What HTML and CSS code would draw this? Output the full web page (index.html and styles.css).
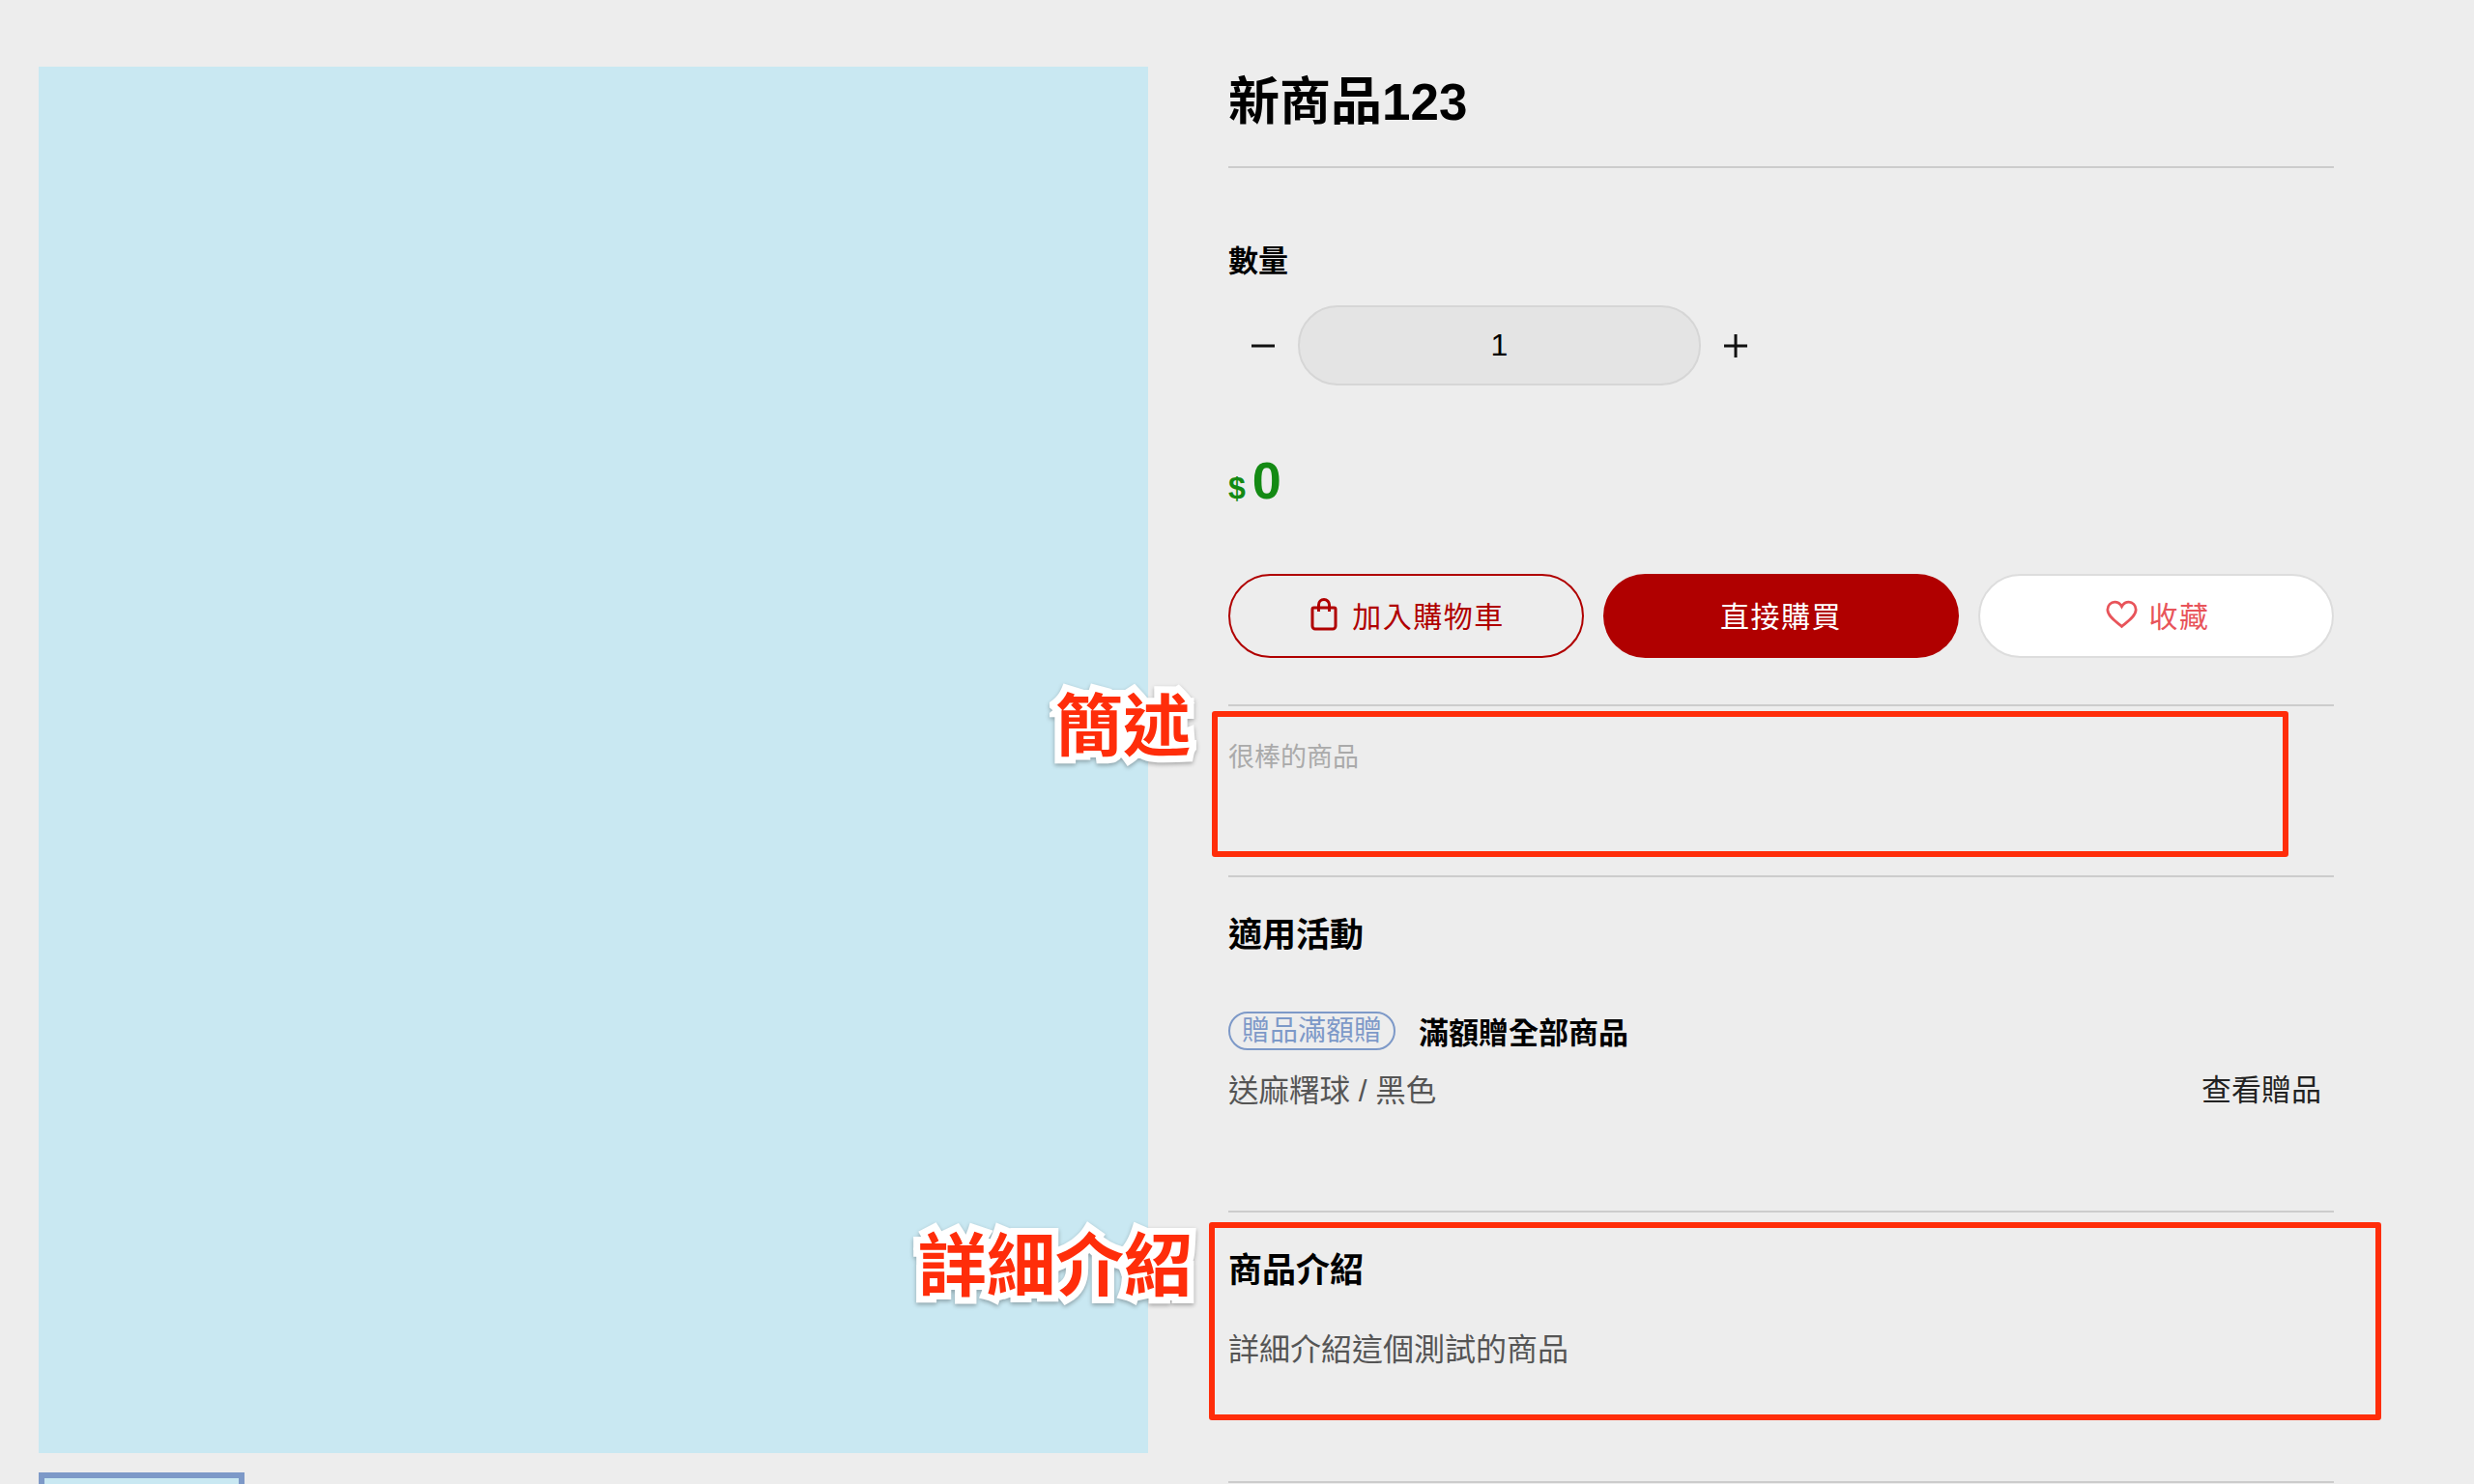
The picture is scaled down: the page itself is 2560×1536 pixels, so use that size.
FILE: index.html
```html
<!DOCTYPE html>
<html>
<head>
    <meta charset="utf-8">
    <link rel="stylesheet" href="styles.css">
</head>
<body>
    <div class="product">
        <div class="gallery">
            <div class="main-image"></div>
            <div class="thumb"></div>
        </div>

        <div class="info">
            <div class="title-block">
                <h1>新商品123</h1>
            </div>

            <div class="qty-block">
                <div class="qty-label">數量</div>
                <div class="qty-row">
                    <div class="qty-btn">
                        <svg width="26" height="26" viewBox="0 0 26 26"><path d="M1 13h24" class="qty-icon"/></svg>
                    </div>
                    <div class="qty-value">1</div>
                    <div class="qty-btn">
                        <svg width="26" height="26" viewBox="0 0 26 26"><path d="M1 13h24M13 1v24" class="qty-icon"/></svg>
                    </div>
                </div>
            </div>

            <div class="price"><span class="price-sign">$</span><span class="price-num">0</span></div>

            <div class="actions">
                <div class="button button-outline">
                    <svg width="28" height="34" viewBox="0 0 28 34" class="btn-icon">
                        <path d="M3.5 10h21a1.5 1.5 0 0 1 1.5 1.5V29a3 3 0 0 1-3 3H5a3 3 0 0 1-3-3V11.500A1.500 1.500 0 0 1 3.500 10z"/>
                        <path d="M8.500 14V7a5.500 5.500 0 0 1 11 0v7"/>
                    </svg>
                    加入購物車
                </div>
                <div class="button button-primary">直接購買</div>
                <div class="button button-fav">
                    <svg width="33" height="30" viewBox="0 0 36 32" class="btn-icon">
                        <path d="M18 29.500C12 24.500 2 18 2 10.500 2 5.500 5.800 2 10 2c3.400 0 6.300 1.800 8 5 1.700-3.200 4.600-5 8-5 4.200 0 8 3.500 8 8.500C34 18 24 24.500 18 29.500z"/>
                    </svg>
                    收藏
                </div>
            </div>

            <div class="summary">很棒的商品</div>

            <div class="promo">
                <h3>適用活動</h3>
                <div class="promo-head">
                    <span class="badge">贈品滿額贈</span>
                    <span class="promo-name">滿額贈全部商品</span>
                </div>
                <div class="promo-row">
                    <span>送麻糬球 / 黑色</span>
                    <span class="promo-link">查看贈品</span>
                </div>
            </div>

            <div class="detail">
                <h3>商品介紹</h3>
                <p>詳細介紹這個測試的商品</p>
            </div>
        </div>
    </div>

    <div class="note-box note-box-summary"></div>
    <div class="note-box note-box-detail"></div>
    <div class="note-label note-label-summary">簡述</div>
    <div class="note-label note-label-detail">詳細介紹</div>
</body>
</html>
```

FILE: styles.css
```css
html, body {
    height: 1536px;
    overflow: hidden;
}

body {
    margin: 0;
    position: relative;
    background: #ededed;
    color: #000;
    font-family: "Liberation Sans", "Noto Sans CJK TC", sans-serif;
}

h1, h3, p {
    margin: 0;
}

.product {
    display: flex;
    height: 1536px;
    box-sizing: border-box;
    overflow: hidden;
    padding: 69px 0 0 40px;
}

.gallery {
    width: 1148px;
    flex-shrink: 0;
}

.main-image {
    height: 1435px;
    background: #c9e8f2;
}

.thumb {
    width: 213px;
    height: 100px;
    margin-top: 20px;
    box-sizing: border-box;
    background: #c9e8f2;
    border: 6px solid #7d99c8;
}

.info {
    width: 1144px;
    margin-left: 83px;
}

.title-block {
    height: 103px;
    border-bottom: 2px solid #ccc;
}

.title-block h1 {
    font-size: 53px;
    line-height: 74px;
    font-weight: bold;
}

.qty-block {
    padding-top: 77px;
}

.qty-label {
    font-size: 31px;
    line-height: 40px;
    font-weight: bold;
}

.qty-row {
    display: flex;
    margin-top: 25px;
    height: 83px;
}

.qty-btn {
    width: 72px;
    display: flex;
    align-items: center;
    justify-content: center;
}

.qty-icon {
    fill: none;
    stroke: #111;
    stroke-width: 3;
}

.qty-value {
    width: 417px;
    box-sizing: border-box;
    border: 2px solid #d6d6d6;
    border-radius: 41px;
    background: #e4e4e4;
    display: flex;
    align-items: center;
    justify-content: center;
    font-size: 32px;
}

.price {
    margin-top: 67px;
    height: 61px;
    color: #148a14;
    display: flex;
    align-items: baseline;
    gap: 7px;
}

.price-sign {
    font-size: 32px;
    font-weight: bold;
}

.price-num {
    font-size: 54px;
    font-weight: bold;
}

.actions {
    display: grid;
    grid-template-columns: repeat(3, 1fr);
    gap: 20px;
    margin-top: 67px;
    padding-bottom: 48px;
    border-bottom: 2px solid #ccc;
}

.button {
    height: 87px;
    box-sizing: border-box;
    border-radius: 44px;
    display: flex;
    align-items: center;
    justify-content: center;
    gap: 15px;
    padding-bottom: 3px;
    font-size: 30px;
    letter-spacing: 1.5px;
}

.btn-icon {
    fill: none;
    stroke: currentColor;
    stroke-width: 3;
}

.button-outline {
    border: 2px solid #b00000;
    color: #b00000;
    padding-left: 3px;
}

.button-primary {
    background: #b00000;
    color: #fff;
}

.button-fav {
    background: #fff;
    border: 2px solid #ddd;
    color: #e8545a;
    gap: 12px;
    padding-left: 3px;
}

.summary {
    height: 177px;
    padding-top: 33px;
    box-sizing: border-box;
    border-bottom: 2px solid #ccc;
    font-size: 27px;
    line-height: 40px;
    color: #aaa;
}

.promo {
    height: 347px;
    box-sizing: border-box;
    padding-top: 38px;
    border-bottom: 2px solid #ccc;
}

.promo h3,
.detail h3 {
    font-size: 35px;
    line-height: 44px;
    font-weight: bold;
}

.promo-head {
    display: flex;
    align-items: center;
    gap: 24px;
    margin-top: 54px;
}

.badge {
    height: 40px;
    box-sizing: border-box;
    padding: 0 12px;
    border: 2px solid #7d99c8;
    border-radius: 20px;
    color: #7d99c8;
    font-size: 29px;
    line-height: 37px;
}

.promo-name {
    font-size: 31px;
    font-weight: bold;
}

.promo-row {
    display: flex;
    justify-content: space-between;
    margin-top: 19px;
    padding-right: 13px;
    font-size: 31.5px;
    line-height: 42px;
    color: #555;
}

.promo-link {
    color: #222;
    font-size: 31px;
}

.detail {
    height: 280px;
    box-sizing: border-box;
    padding-top: 38px;
    border-bottom: 2px solid #ccc;
}

.detail p {
    margin-top: 38px;
    font-size: 32px;
    line-height: 44px;
    color: #555;
}

/* annotation layer over the page */
.note-box {
    position: absolute;
    box-sizing: border-box;
    border: 6px solid #ff2d0a;
    border-radius: 3px;
}

.note-box-summary {
    left: 1254px;
    top: 736px;
    width: 1114px;
    height: 151px;
}

.note-box-detail {
    left: 1251px;
    top: 1265px;
    width: 1213px;
    height: 205px;
}

.note-label {
    position: absolute;
    font-family: "Noto Sans CJK TC", sans-serif;
    font-weight: bold;
    color: #ff2d0a;
    -webkit-text-stroke: 14px #fff;
    paint-order: stroke fill;
    filter: drop-shadow(0 2px 2px rgba(0,0,0,0.3));
}

.note-label-summary {
    left: 1092px;
    top: 697px;
    font-size: 70px;
    line-height: 100px;
}

.note-label-detail {
    left: 950px;
    top: 1254px;
    font-size: 71px;
    line-height: 100px;
}
```
